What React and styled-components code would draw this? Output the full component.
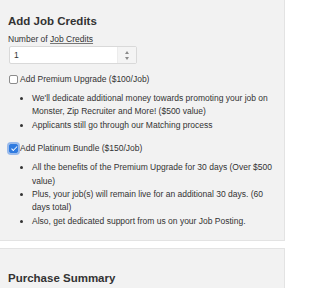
import React, { useState } from 'react';
import styled, { createGlobalStyle } from 'styled-components';

const GlobalStyle = createGlobalStyle`
  html, body {
    margin: 0;
    padding: 0;
    background: #fff;
  }
  body {
    font-family: 'Liberation Sans', Arial, Helvetica, sans-serif;
    color: #333;
  }
`;

const premiumPerks = [
  "We'll dedicate additional money towards promoting your job on Monster, Zip Recruiter and More! ($500 value)",
  'Applicants still go through our Matching process',
];

const platinumPerks = [
  'All the benefits of the Premium Upgrade for 30 days (Over $500 value)',
  'Plus, your job(s) will remain live for an additional 30 days. (60 days total)',
  'Also, get dedicated support from us on your Job Posting.',
];

const App = () => {
  const [credits, setCredits] = useState(1);
  const [premium, setPremium] = useState(false);
  const [platinum, setPlatinum] = useState(true);

  return (
    <Page>
      <GlobalStyle />
      <Panel>
        <Heading>Add Job Credits</Heading>
        <FieldLabel htmlFor='credits'>
          Number of <Abbr>Job Credits</Abbr>
        </FieldLabel>
        <NumberBox>
          <NumberInput
            id='credits'
            value={credits}
            onChange={e => setCredits(e.target.value)}
          />
          <Spinner>
            <SpinArrow $up onClick={() => setCredits(c => Number(c) + 1)} />
            <SpinArrow onClick={() => setCredits(c => Math.max(1, Number(c) - 1))} />
          </Spinner>
        </NumberBox>

        <CheckRow>
          <Check
            type='checkbox'
            checked={premium}
            onChange={() => setPremium(p => !p)}
          />
          Add Premium Upgrade ($100/Job)
        </CheckRow>
        <PerkList>
          {premiumPerks.map(perk => (
            <li key={perk}>{perk}</li>
          ))}
        </PerkList>

        <CheckRow>
          <Check
            type='checkbox'
            $focused
            checked={platinum}
            onChange={() => setPlatinum(p => !p)}
          />
          Add Platinum Bundle ($150/Job)
        </CheckRow>
        <PerkList>
          {platinumPerks.map(perk => (
            <li key={perk}>{perk}</li>
          ))}
        </PerkList>
      </Panel>

      <Panel>
        <Heading>Purchase Summary</Heading>
      </Panel>
    </Page>
  );
};

const Page = styled.div`
  width: 285px;
  margin-top: -9px;
  display: flex;
  flex-direction: column;
  gap: 7px;
`;

const Panel = styled.section`
  background: #f2f2f2;
  border: 1px solid #e3e3e3;
  border-left: none;
  padding: 22px 9px 12px 8px;
`;

const Heading = styled.h3`
  margin: 0 0 5px;
  font-size: 11.5px;
  line-height: 14px;
  font-weight: 700;
  color: #333;
`;

const FieldLabel = styled.label`
  display: block;
  font-size: 8.5px;
  line-height: 12px;
`;

const Abbr = styled.span`
  text-decoration: underline;
  text-decoration-color: #777;
`;

const NumberBox = styled.div`
  display: flex;
  width: 128px;
  height: 18px;
  margin: 1px 0 0 1px;
  box-sizing: border-box;
  background: #fff;
  border: 1px solid #d9d9d9;
  border-radius: 2px;
`;

const NumberInput = styled.input`
  flex: 1;
  min-width: 0;
  border: none;
  outline: none;
  background: transparent;
  padding: 0 4px;
  font-family: inherit;
  font-size: 8.5px;
  color: #333;
`;

const Spinner = styled.div`
  width: 18px;
  display: flex;
  flex-direction: column;
  align-items: center;
  justify-content: center;
  gap: 3px;
  background: #f4f4f4;
  border-left: 1px solid #ececec;
`;

const SpinArrow = styled.span`
  width: 0;
  height: 0;
  border-left: 2px solid transparent;
  border-right: 2px solid transparent;
  ${p =>
    p.$up
      ? 'border-bottom: 3px solid #8a8a8a;'
      : 'border-top: 3px solid #8a8a8a;'}
  cursor: pointer;
`;

const CheckRow = styled.label`
  display: flex;
  align-items: center;
  margin-top: 9px;
  font-size: 8.5px;
  line-height: 12px;
  color: #333;
`;

const Check = styled.input`
  appearance: none;
  width: 9px;
  height: 9px;
  margin: 0 2px 0 1px;
  box-sizing: border-box;
  border: 1px solid #8c8c8c;
  border-radius: 2px;
  background: #fff;
  position: relative;
  ${p => p.$focused && 'box-shadow: 0 0 0 2px rgba(80, 140, 230, 0.55);'}

  &:checked {
    background: #2f7be0;
    border-color: #2f7be0;
  }
  &:checked::after {
    content: '';
    position: absolute;
    left: 2.5px;
    top: 0.5px;
    width: 2px;
    height: 4.5px;
    border: solid #fff;
    border-width: 0 1.2px 1.2px 0;
    transform: rotate(45deg);
  }
`;

const PerkList = styled.ul`
  margin: 7px 0 10px;
  padding-left: 24px;
  font-size: 8.5px;
  line-height: 13.4px;
  list-style: disc;

  &:last-child {
    margin-bottom: 0;
  }
`;

export default App;
